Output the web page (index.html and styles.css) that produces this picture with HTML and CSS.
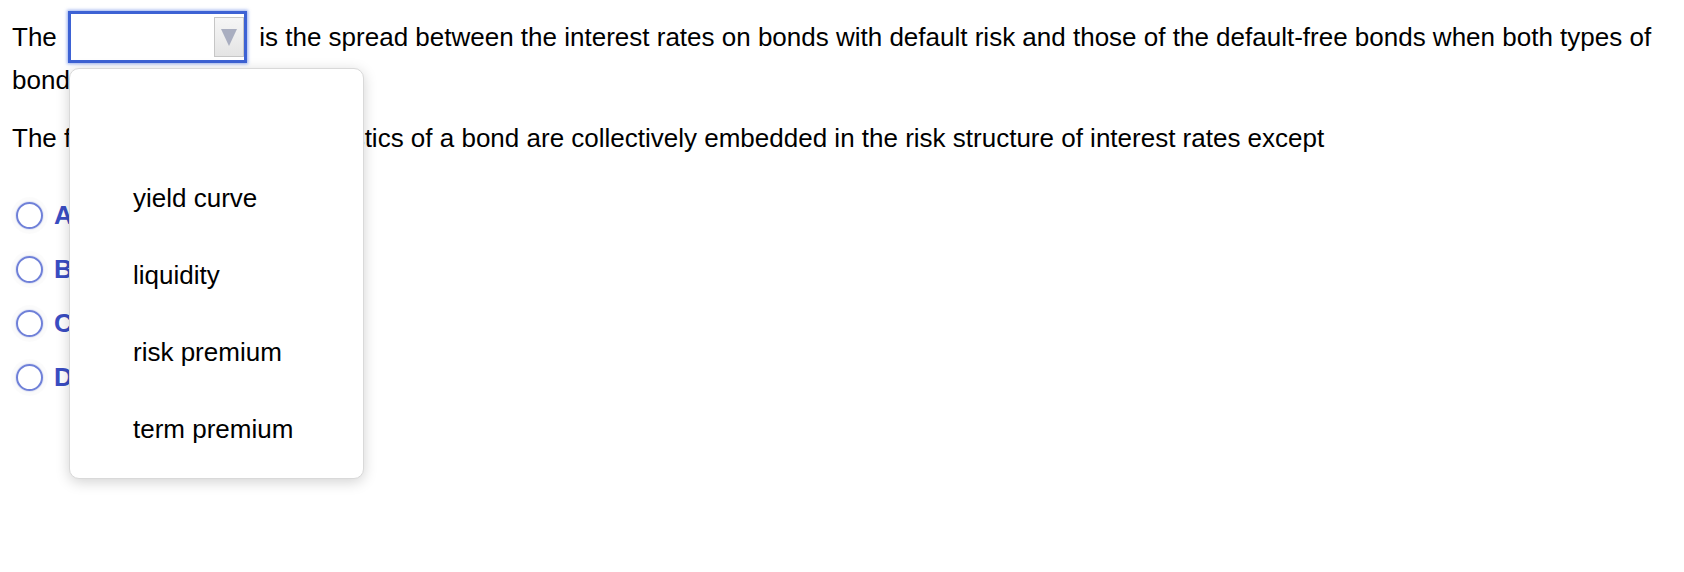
FILE: index.html
```html
<!DOCTYPE html>
<html lang="en">
<head>
<meta charset="utf-8">
<title>Risk structure question</title>
<link rel="stylesheet" href="styles.css">
</head>
<body>
<div class="page">
  <p class="q1">The <span class="select"><span class="select-btn"><svg class="tri" width="16" height="17" viewBox="0 0 16 17"><polygon points="0,0 16,0 8,17" fill="#a9aec0"/></svg></span></span> is the spread between the interest rates on bonds with default risk and those of the default-free bonds when both types of bonds have the same maturity.</p>
  <p class="q2">The following bond characteristics of a bond are collectively embedded in the risk structure of interest rates except</p>
  <ul class="choices">
    <li class="choice"><span class="radio"></span><span class="letter">A.</span></li>
    <li class="choice"><span class="radio"></span><span class="letter">B.</span></li>
    <li class="choice"><span class="radio"></span><span class="letter">C.</span></li>
    <li class="choice"><span class="radio"></span><span class="letter">D.</span></li>
  </ul>
  <div class="popup">
    <div class="option"></div>
    <div class="option">yield curve</div>
    <div class="option">liquidity</div>
    <div class="option">risk premium</div>
    <div class="option">term premium</div>
  </div>
</div>
</body>
</html>
```
FILE: styles.css
```css
html, body {
  margin: 0;
  padding: 0;
  background: #ffffff;
}
body {
  font-family: "Liberation Sans", Arial, sans-serif;
  font-size: 26px;
  color: #000000;
}
.page {
  position: relative;
  box-sizing: border-box;
  min-height: 572px;
  padding: 11px 12px 0 12px;
}
p {
  margin: 0;
}
.q1 {
  line-height: 34px;
}
.q2 {
  margin-top: 24px;
  line-height: 34px;
}
.select {
  display: inline-block;
  overflow: hidden;
  box-sizing: border-box;
  width: 179px;
  height: 52px;
  margin: 0 5px 0 4px;
  padding: 3px 0;
  border: 3px solid #3d62d4;
  box-shadow: 0 0 3px 1px rgba(70, 110, 225, 0.55);
  background: #ffffff;
  vertical-align: -17px;
}
.select-btn {
  display: flex;
  align-items: center;
  justify-content: center;
  box-sizing: border-box;
  width: 30px;
  height: 40px;
  margin-left: auto;
  border: 1px solid #c6c6c6;
  background: linear-gradient(#f6f6f6, #e4e4e4);
}
.choices {
  list-style: none;
  margin: 33px 0 0 0;
  padding: 0;
}
.choice {
  display: flex;
  align-items: center;
  height: 54px;
}
.radio {
  box-sizing: border-box;
  width: 27px;
  height: 27px;
  margin-left: 4px;
  border: 2.5px solid #6f80d8;
  border-radius: 50%;
  box-shadow: 0 0 1.5px rgba(111, 128, 216, 0.75), 0 0 0 5px rgba(0, 0, 0, 0.015);
}
.letter {
  margin-left: 11px;
  font-weight: bold;
  color: #3a4dc2;
}
.popup {
  position: absolute;
  left: 69px;
  top: 68px;
  width: 295px;
  box-sizing: border-box;
  padding: 14px 0 10px 0;
  background: #ffffff;
  border: 1px solid #d9d9d9;
  border-radius: 10px;
  box-shadow: 0 3px 14px rgba(0, 0, 0, 0.18);
}
.option {
  height: 77px;
  display: flex;
  align-items: center;
  padding-left: 63px;
}
```
